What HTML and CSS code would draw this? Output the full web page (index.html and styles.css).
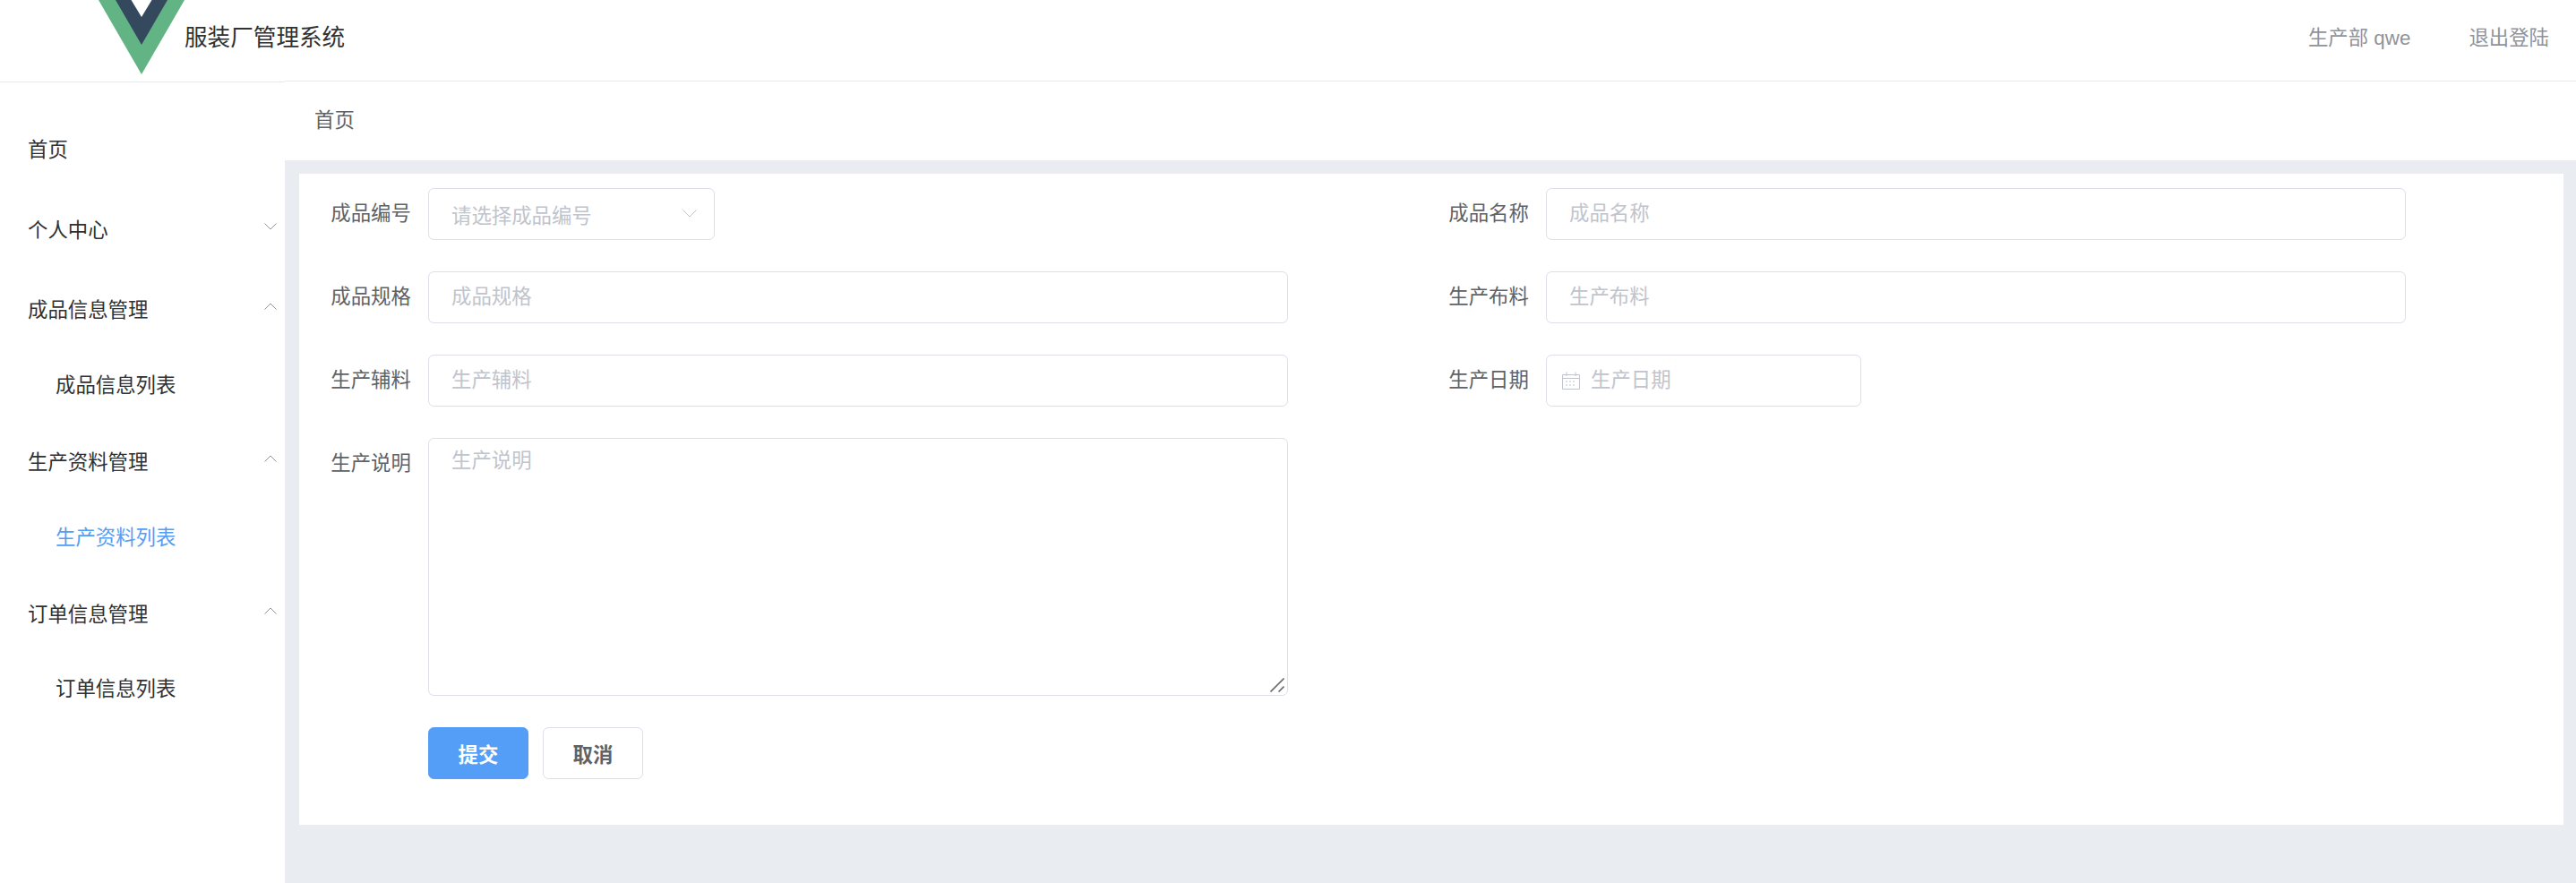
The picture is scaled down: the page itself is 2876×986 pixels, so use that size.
FILE: index.html
```html
<!DOCTYPE html>
<html lang="zh-CN">
<head>
    <meta charset="UTF-8">
    <meta name="viewport" content="width=device-width, initial-scale=1.0">
    <title>服装厂管理系统</title>
    <link rel="stylesheet" href="styles.css">
</head>
<body>
    <header class="topbar">
        <svg class="logo" width="96" height="83" viewBox="0 0 96 83">
            <polygon points="0,0 96,0 48,83" fill="#62b485"/>
            <polygon points="19,0 77,0 48,50" fill="#35495e"/>
            <polygon points="36.5,0 59.5,0 48,19" fill="#fff"/>
        </svg>
        <div class="brand">服装厂管理系统</div>
        <div class="user-box">
            <span>生产部 qwe</span>
            <span>退出登陆</span>
        </div>
    </header>

    <div class="layout">
        <nav class="sidebar">
            <div class="menu-title">首页</div>
            <div class="menu-title">个人中心
                <svg class="arrow" width="14" height="8" viewBox="0 0 14 8"><path d="M0.5 0.5 L7 7 L13.5 0.5"/></svg>
            </div>
            <div class="menu-title">成品信息管理
                <svg class="arrow" width="14" height="8" viewBox="0 0 14 8"><path d="M0.5 7.5 L7 1 L13.5 7.5"/></svg>
            </div>
            <div class="menu-item">成品信息列表</div>
            <div class="menu-title">生产资料管理
                <svg class="arrow" width="14" height="8" viewBox="0 0 14 8"><path d="M0.5 7.5 L7 1 L13.5 7.5"/></svg>
            </div>
            <div class="menu-item active">生产资料列表</div>
            <div class="menu-title">订单信息管理
                <svg class="arrow" width="14" height="8" viewBox="0 0 14 8"><path d="M0.5 7.5 L7 1 L13.5 7.5"/></svg>
            </div>
            <div class="menu-item">订单信息列表</div>
        </nav>

        <main class="main">
            <div class="breadcrumb">首页</div>
            <div class="content">
                <form class="card">
                    <div class="form-item">
                        <label>成品编号</label>
                        <div class="select-box">
                            <span>请选择成品编号</span>
                            <svg class="select-arrow" width="16" height="9" viewBox="0 0 16 9"><path d="M0.5 0.5 L8 8 L15.5 0.5"/></svg>
                        </div>
                    </div>
                    <div class="form-item">
                        <label>成品名称</label>
                        <input class="text-input" type="text" placeholder="成品名称">
                    </div>
                    <div class="form-item">
                        <label>成品规格</label>
                        <input class="text-input" type="text" placeholder="成品规格">
                    </div>
                    <div class="form-item">
                        <label>生产布料</label>
                        <input class="text-input" type="text" placeholder="生产布料">
                    </div>
                    <div class="form-item">
                        <label>生产辅料</label>
                        <input class="text-input" type="text" placeholder="生产辅料">
                    </div>
                    <div class="form-item">
                        <label>生产日期</label>
                        <div class="date-box">
                            <svg class="date-icon" width="20" height="20" viewBox="0 0 20 20">
                                <path d="M0.5 3.5 H19.5 V19.5 H0.5 Z M0.5 7.5 H19.5 M5 0.5 V5 M15 0.5 V5"/>
                                <path class="dots" d="M4 11 H16 M4 15 H16"/>
                            </svg>
                            <input type="text" placeholder="生产日期">
                        </div>
                    </div>
                    <div class="form-item">
                        <label>生产说明</label>
                        <div class="area-wrap">
                            <textarea class="text-area" placeholder="生产说明"></textarea>
                            <svg class="resize-grip" width="16" height="16" viewBox="0 0 16 16"><path d="M0.5 15.5 L15.5 0.5 M9.5 15.5 L15.5 9.5"/></svg>
                        </div>
                    </div>
                    <div class="form-actions">
                        <button type="button" class="btn btn-primary">提交</button>
                        <button type="button" class="btn">取消</button>
                    </div>
                </form>
            </div>
        </main>
    </div>
</body>
</html>
```

FILE: styles.css
```css
* {
    box-sizing: border-box;
}

html, body {
    height: 100%;
}

body {
    margin: 0;
    font-family: "Liberation Sans", "Noto Sans CJK SC", sans-serif;
    font-size: 22.4px;
    color: #303133;
    background-color: #fff;
    overflow: hidden;
}

.topbar {
    display: flex;
    align-items: flex-start;
    height: 91px;
    padding-left: 110px;
    border-bottom: 1px solid #e9e9e9;
}

.logo {
    display: block;
    flex: none;
}

.brand {
    font-size: 25.6px;
    line-height: 84px;
}

.user-box {
    display: flex;
    gap: 65px;
    margin-left: auto;
    padding-right: 30px;
    line-height: 86px;
    color: #909399;
}

.layout {
    display: flex;
    height: 895px;
}

/* the line over the sidebar sits 1px lower than the one over the main area */
.sidebar {
    flex: none;
    width: 318px;
    margin-top: -1px;
    padding-top: 30.5px;
    background-color: #fff;
    box-shadow: inset 0 1px 0 #fff, inset 0 2px 0 #e9e9e9;
}

.menu-title {
    display: flex;
    align-items: center;
    justify-content: space-between;
    height: 89.6px;
    padding: 0 9px 0 31px;
}

.menu-item {
    height: 80px;
    padding-left: 62px;
    line-height: 83px;
}

.menu-item.active {
    color: #559ef5;
}

.arrow {
    fill: none;
    stroke: #909399;
    stroke-width: 1;
    margin-top: -4px;
}

.main {
    flex: 1;
    display: flex;
    flex-direction: column;
    min-width: 0;
}

.breadcrumb {
    height: 88px;
    padding-left: 33px;
    line-height: 88px;
    color: #606266;
}

.content {
    flex: 1;
    padding: 15px 14px 0 16px;
    background-color: #e9edf2;
}

.card {
    display: grid;
    grid-template-columns: 1248px 1248px;
    align-items: start;
    padding: 16px;
    background-color: #fff;
}

.form-item {
    display: flex;
    margin-bottom: 35.4px;
}

.form-item label {
    flex: none;
    width: 128px;
    padding-right: 19.2px;
    text-align: right;
    line-height: 57.6px;
    color: #606266;
}

.text-input,
.select-box,
.date-box,
.text-area {
    border: 1px solid #dcdfe6;
    border-radius: 6.4px;
    background-color: #fff;
    font-family: inherit;
    font-size: 22.4px;
    color: #606266;
}

.text-input {
    width: 960px;
    height: 57.6px;
    padding: 0 25px;
    outline: none;
}

.select-box {
    display: flex;
    align-items: center;
    justify-content: space-between;
    width: 320px;
    height: 57.6px;
    padding: 0 19px 0 25px;
    color: #c0c4cc;
}

.select-arrow {
    fill: none;
    stroke: #c0c4cc;
    stroke-width: 1;
}

.date-box {
    display: flex;
    align-items: center;
    width: 352px;
    height: 57.6px;
    padding-left: 17px;
}

.date-box input {
    flex: 1;
    min-width: 0;
    margin-left: 12px;
    padding: 0;
    border: none;
    outline: none;
    font: inherit;
}

.date-icon {
    flex: none;
    fill: none;
    stroke: #c0c4cc;
    stroke-width: 1;
}

.date-icon .dots {
    stroke-dasharray: 2 2;
}

input::placeholder,
textarea::placeholder {
    color: #c0c4cc;
    opacity: 1;
}

.area-wrap {
    position: relative;
    width: 960px;
    height: 288px;
}

.text-area {
    display: block;
    width: 100%;
    height: 100%;
    padding: 8px 25px;
    line-height: 1.5;
    outline: none;
    resize: none;
}

.resize-grip {
    position: absolute;
    right: 4px;
    bottom: 4px;
    fill: none;
    stroke: #6b6b6b;
    stroke-width: 1.6;
}

.form-actions {
    grid-column: 1 / -1;
    display: flex;
    gap: 16px;
    margin-left: 128px;
    margin-bottom: 35.2px;
}

.btn {
    width: 112px;
    height: 57.6px;
    padding: 0;
    border: 1px solid #dcdfe6;
    border-radius: 6.4px;
    background-color: #fff;
    font-family: inherit;
    font-size: 22.4px;
    font-weight: 700;
    color: #606266;
}

.btn-primary {
    border-color: #559ef8;
    background-color: #559ef8;
    color: #fff;
}
```
